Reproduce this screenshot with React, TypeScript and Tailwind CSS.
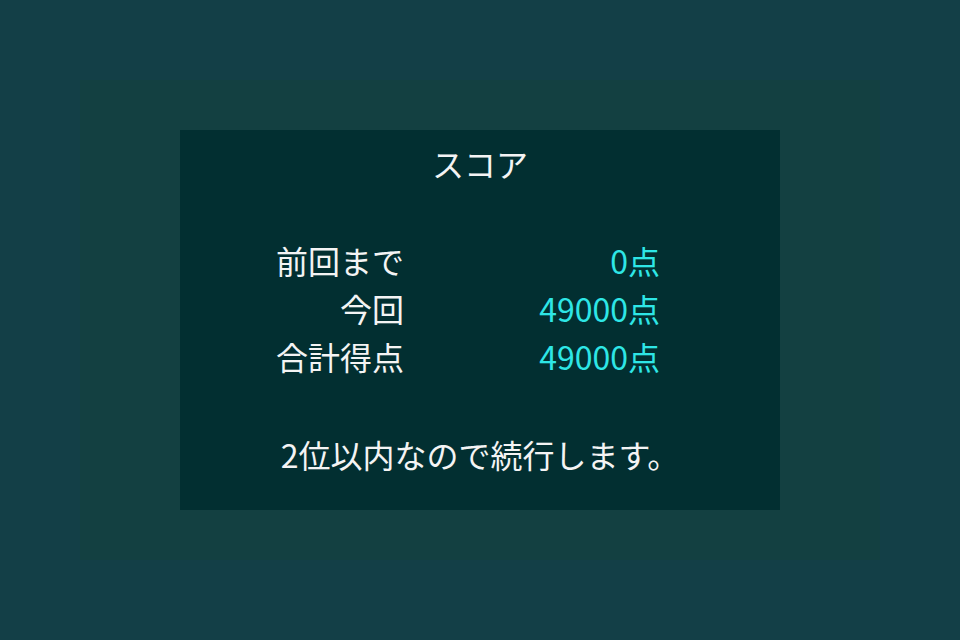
import React from 'react';

type ScoreRow = { label: string; value: string };

const rows: ScoreRow[] = [
  { label: '前回まで', value: '0点' },
  { label: '今回', value: '49000点' },
  { label: '合計得点', value: '49000点' },
];

const App: React.FC = () => {
  return (
    <div
      className="w-[960px] h-[640px] bg-[#133f47] p-[80px] text-[32px] leading-[48px] text-[#f4f4f4]"
      style={{ fontFamily: '"Noto Sans CJK JP", "Noto Sans", sans-serif' }}
    >
      <div className="w-full h-full bg-[#134041] px-[100px] py-[50px]">
        <div className="w-full h-full bg-[#022f31] pt-[9px]">
          <div className="text-center">スコア</div>

          <div className="mt-[49px] grid grid-cols-[224px_256px]">
            {rows.map((row) => (
              <React.Fragment key={row.label}>
                <div className="text-right">{row.label}</div>
                <div className="text-right text-[#2ee6e6]">{row.value}</div>
              </React.Fragment>
            ))}
          </div>

          <div className="mt-[50px] text-center">2位以内なので続行します。</div>
        </div>
      </div>
    </div>
  );
};

export default App;
